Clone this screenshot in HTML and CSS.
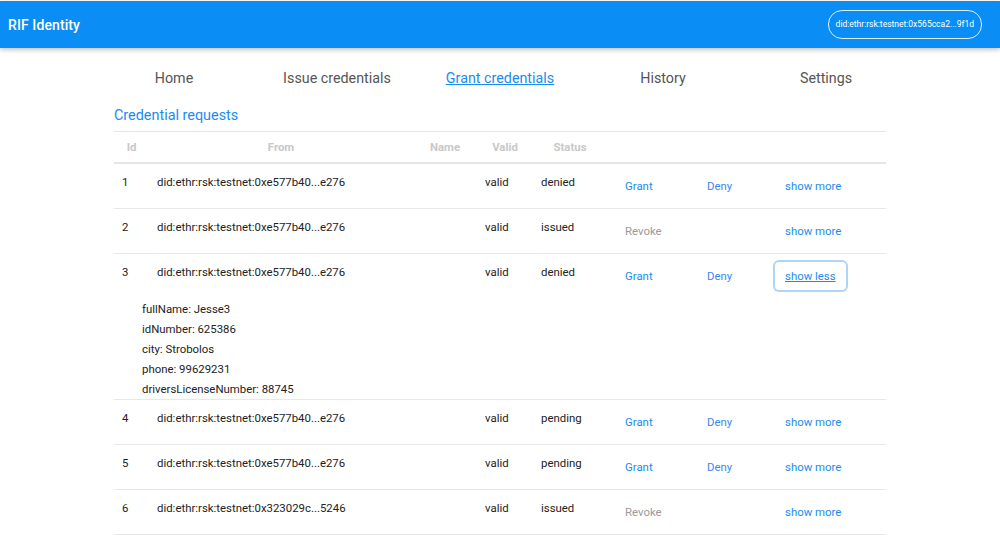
FILE: index.html
```html
<!DOCTYPE html>
<html>
<head>
<meta charset="utf-8">
<link rel="stylesheet" href="styles.css">
</head>
<body>
<header class="appbar">
  <div class="brand">RIF Identity</div>
  <div class="did-pill">did:ethr:rsk:testnet:0x565cca2...9f1d</div>
</header>
<nav class="nav">
  <a class="nav-item">Home</a>
  <a class="nav-item">Issue credentials</a>
  <a class="nav-item active">Grant credentials</a>
  <a class="nav-item">History</a>
  <a class="nav-item">Settings</a>
</nav>
<main class="container">
  <h2 class="title">Credential requests</h2>
  <div class="table">
    <div class="thead">
      <div class="th">Id</div>
      <div class="th">From</div>
      <div class="th">Name</div>
      <div class="th">Valid</div>
      <div class="th">Status</div>
      <div class="th"></div>
    </div>

    <div class="row">
      <div class="main">
        <div class="td">1</div>
        <div class="td">did:ethr:rsk:testnet:0xe577b40...e276</div>
        <div class="td"></div>
        <div class="td">valid</div>
        <div class="td">denied</div>
        <div class="actions">
          <span class="slot s1"><button class="btn">Grant</button></span>
          <span class="slot s2"><button class="btn deny">Deny</button></span>
          <span class="slot"><button class="btn">show more</button></span>
        </div>
      </div>
    </div>

    <div class="row">
      <div class="main">
        <div class="td">2</div>
        <div class="td">did:ethr:rsk:testnet:0xe577b40...e276</div>
        <div class="td"></div>
        <div class="td">valid</div>
        <div class="td">issued</div>
        <div class="actions">
          <span class="slot s1"><button class="btn revoke">Revoke</button></span>
          <span class="slot s2"></span>
          <span class="slot"><button class="btn">show more</button></span>
        </div>
      </div>
    </div>

    <div class="row">
      <div class="main">
        <div class="td">3</div>
        <div class="td">did:ethr:rsk:testnet:0xe577b40...e276</div>
        <div class="td"></div>
        <div class="td">valid</div>
        <div class="td">denied</div>
        <div class="actions">
          <span class="slot s1"><button class="btn">Grant</button></span>
          <span class="slot s2"><button class="btn deny">Deny</button></span>
          <span class="slot"><button class="btn focused">show less</button></span>
        </div>
      </div>
      <div class="details">
        <div>fullName: Jesse3</div>
        <div>idNumber: 625386</div>
        <div>city: Strobolos</div>
        <div>phone: 99629231</div>
        <div>driversLicenseNumber: 88745</div>
      </div>
    </div>

    <div class="row">
      <div class="main">
        <div class="td">4</div>
        <div class="td">did:ethr:rsk:testnet:0xe577b40...e276</div>
        <div class="td"></div>
        <div class="td">valid</div>
        <div class="td">pending</div>
        <div class="actions">
          <span class="slot s1"><button class="btn">Grant</button></span>
          <span class="slot s2"><button class="btn deny">Deny</button></span>
          <span class="slot"><button class="btn">show more</button></span>
        </div>
      </div>
    </div>

    <div class="row">
      <div class="main">
        <div class="td">5</div>
        <div class="td">did:ethr:rsk:testnet:0xe577b40...e276</div>
        <div class="td"></div>
        <div class="td">valid</div>
        <div class="td">pending</div>
        <div class="actions">
          <span class="slot s1"><button class="btn">Grant</button></span>
          <span class="slot s2"><button class="btn deny">Deny</button></span>
          <span class="slot"><button class="btn">show more</button></span>
        </div>
      </div>
    </div>

    <div class="row">
      <div class="main">
        <div class="td">6</div>
        <div class="td">did:ethr:rsk:testnet:0x323029c...5246</div>
        <div class="td"></div>
        <div class="td">valid</div>
        <div class="td">issued</div>
        <div class="actions">
          <span class="slot s1"><button class="btn revoke">Revoke</button></span>
          <span class="slot s2"></span>
          <span class="slot"><button class="btn">show more</button></span>
        </div>
      </div>
    </div>
  </div>
</main>
</body>
</html>
```

FILE: styles.css
```css
* { box-sizing: border-box; }
html, body { margin: 0; padding: 0; background: #fff; }
body {
  font-family: Roboto, "Liberation Sans", Arial, sans-serif;
  color: #222;
  overflow: hidden;
}
.appbar {
  height: 47px;
  margin-top: 1px;
  background: #0a8df5;
  display: flex;
  align-items: center;
  justify-content: space-between;
  padding: 0 18px 0 8px;
  box-shadow: 0 2px 4px rgba(0,0,0,0.18), 0 1px 8px rgba(0,0,0,0.08);
  position: relative;
}
.brand {
  color: #fff;
  font-size: 14px;
  font-weight: 500;
  letter-spacing: 0.1px;
}
.did-pill {
  color: #fff;
  font-size: 8.5px;
  height: 29px;
  line-height: 27px;
  padding: 0 7px;
  border: 1px solid rgba(255,255,255,0.85);
  border-radius: 14px;
}
.nav {
  width: 815px;
  margin: 0 auto;
  display: grid;
  grid-template-columns: repeat(5, 1fr);
  padding-top: 21px;
  height: 100px;
}
.nav-item {
  text-align: center;
  font-size: 14.3px;
  line-height: 18px;
  color: #555;
}
.nav-item.active {
  color: #1a8cf0;
  text-decoration: underline;
}
.container {
  width: 772px;
  margin: 0 auto;
  margin-top: -41px;
}
.title {
  margin: 0;
  font-size: 14.4px;
  font-weight: 400;
  line-height: 18px;
  color: #1a8cf0;
  height: 24px;
}
.thead, .main {
  display: grid;
  grid-template-columns: 35px 264px 64px 56px 74px 1fr;
}
.thead {
  border-top: 1px solid #e5e5e5;
  border-bottom: 2px solid #e5e5e5;
  height: 33px;
}
.th {
  text-align: center;
  font-size: 11.4px;
  font-weight: 700;
  color: #c8c8c8;
  line-height: 16px;
  padding-top: 7px;
}
.row {
  border-bottom: 1px solid #e8e8e8;
}
.td {
  font-size: 11.4px;
  line-height: 16px;
  padding: 10px 0 0 8px;
  color: #222;
}
.actions {
  display: flex;
  padding: 8px 0 8px 8px;
}
.slot { display: block; }
.slot.s1 { width: 82px; }
.slot.s2 { width: 78px; }
.btn {
  font-family: inherit;
  font-size: 11.4px;
  line-height: 16px;
  height: 28px;
  padding: 6px 10px;
  border: none;
  background: none;
  color: #1a8cf0;
  border-radius: 4px;
  display: block;
}
.btn.deny { color: #3e86ef; }
.btn.revoke { color: #9a9a9a; }
.btn.focused {
  text-decoration: underline;
  box-shadow: 0 0 0 2px #b0d4f8;
  height: 28px;
}
.details {
  padding: 1px 0 0 28px;
  font-size: 11.4px;
  line-height: 20px;
  color: #222;
}
```
